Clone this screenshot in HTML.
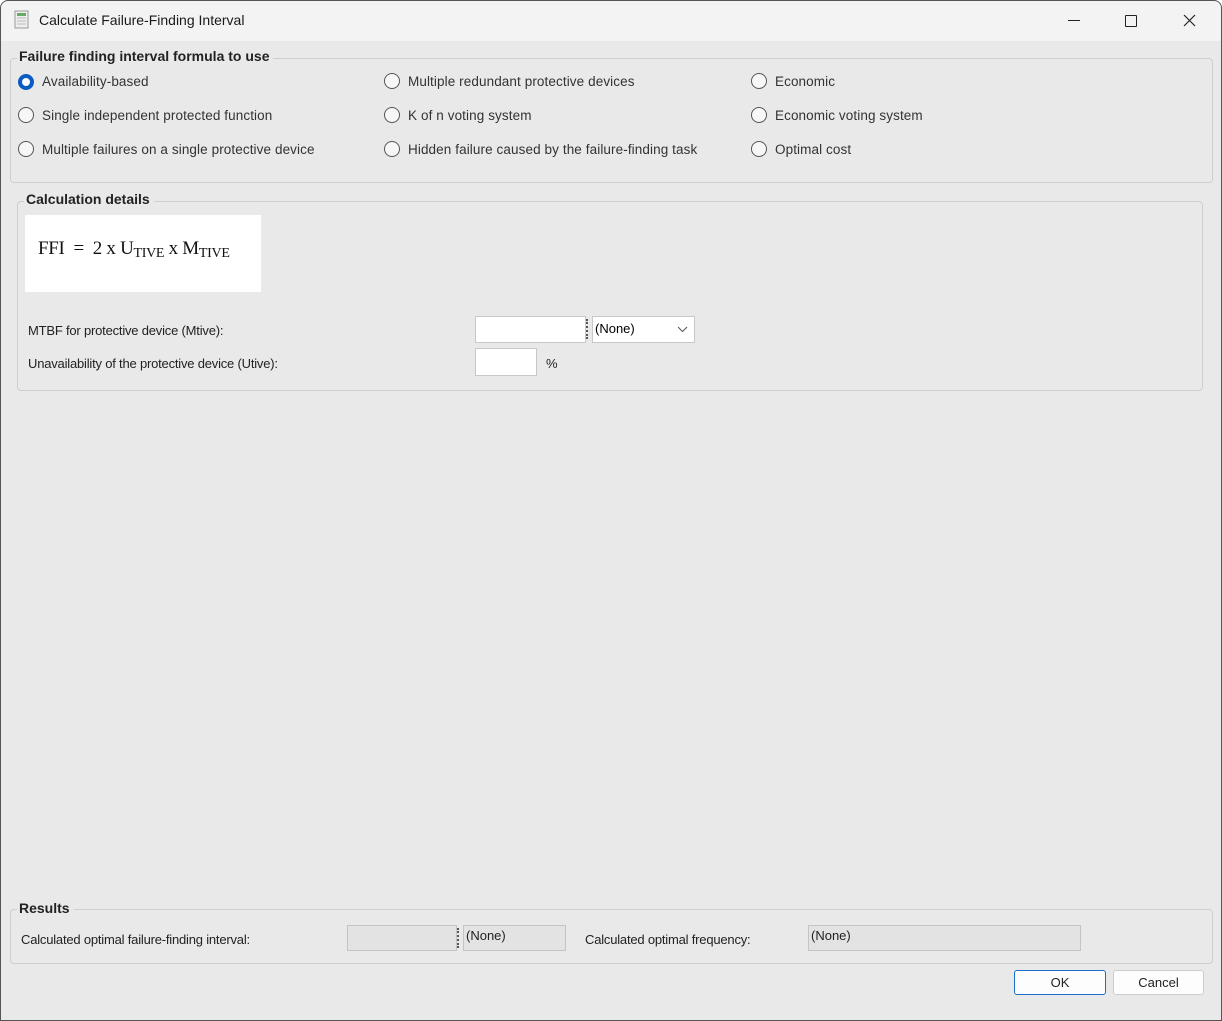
<!DOCTYPE html><html><head><meta charset="utf-8"><style>
body{margin:0;width:1222px;height:1021px;overflow:hidden;font-family:"Liberation Sans",sans-serif;}
.win{position:absolute;left:0;top:0;width:1222px;height:1021px;background:#e9e9e9;overflow:hidden;border-radius:8px 8px 0 0}
.in0{position:absolute;left:1px;top:1px;width:1220px;height:1019px}
.bd{position:absolute;left:0;top:0;width:1220px;height:1019px;border:1px solid #555;border-radius:8px 8px 0 0}
.title{position:absolute;left:-1px;top:-1px;width:1222px;height:41px;background:#f3f3f3}
.t{position:absolute;font-size:14px;color:#1a1a1a}
.box{position:absolute;border:1px solid #cfcfcf;border-radius:4px}
.lg{position:absolute;font-size:14px;font-weight:bold;color:#222;background:#e9e9e9;padding:0 4px 0 2px}
.r{position:absolute;font-size:13.5px;color:#333;letter-spacing:0.1px}
.rd{position:absolute;width:14px;height:14px;border:1px solid #555;border-radius:50%;background:#f7f7f7}
.s{position:absolute;font-size:13px;color:#222;letter-spacing:-0.2px}
.in{position:absolute;background:#fff;border:1px solid #c8c8c8}
.dis{position:absolute;background:#e3e3e3;border:1px solid #c4c4c4;font-size:13px;color:#222;box-sizing:border-box;padding:2px 2px}
.btn{position:absolute;height:25px;box-sizing:border-box;border:1px solid #ccc;background:#fdfdfd;border-radius:3px;font-size:13px;text-align:center;line-height:23px;color:#222}
sub{font-size:14px;vertical-align:-3px}
</style></head><body><div class="win"><div class="in0">
<div class="title">
<svg style="position:absolute;left:14px;top:10px" width="16" height="19"><rect x="1" y="1" width="13" height="17" fill="#eee" stroke="#999"/><rect x="3" y="3" width="9" height="3" fill="#6a6"/><path d="M3 8h9M3 11h9M3 14h9" stroke="#bbb"/></svg>
<div class="t" style="left:39px;top:12px">Calculate Failure-Finding Interval</div>
<div style="position:absolute;left:1068px;top:20px;width:12px;height:1px;background:#222"></div>
<div style="position:absolute;left:1125px;top:15px;width:10px;height:10px;border:1px solid #222;border-radius:1px"></div>
<svg style="position:absolute;left:1183px;top:14px" width="13" height="13"><path d="M1 1L12 12M12 1L1 12" stroke="#222" stroke-width="1.2"/></svg>
</div>
<div class="box" style="left:9px;top:57px;width:1201px;height:123px"></div>
<div class="lg" style="left:16px;top:47px">Failure finding interval formula to use</div>
<div class="rd" style="left:17px;top:73px;border:4px solid #0a5cc2;width:8px;height:8px;background:#fff"></div><div class="r" style="left:41px;top:73px">Availability-based</div>
<div class="rd" style="left:17px;top:106px"></div><div class="r" style="left:41px;top:107px">Single independent protected function</div>
<div class="rd" style="left:17px;top:140px"></div><div class="r" style="left:41px;top:141px">Multiple failures on a single protective device</div>
<div class="rd" style="left:383px;top:72px"></div><div class="r" style="left:407px;top:73px">Multiple redundant protective devices</div>
<div class="rd" style="left:383px;top:106px"></div><div class="r" style="left:407px;top:107px">K of n voting system</div>
<div class="rd" style="left:383px;top:140px"></div><div class="r" style="left:407px;top:141px">Hidden failure caused by the failure-finding task</div>
<div class="rd" style="left:750px;top:72px"></div><div class="r" style="left:774px;top:73px">Economic</div>
<div class="rd" style="left:750px;top:106px"></div><div class="r" style="left:774px;top:107px">Economic voting system</div>
<div class="rd" style="left:750px;top:140px"></div><div class="r" style="left:774px;top:141px">Optimal cost</div>
<div class="box" style="left:16px;top:200px;width:1184px;height:188px"></div>
<div class="lg" style="left:23px;top:190px">Calculation details</div>
<div style="position:absolute;left:24px;top:214px;width:236px;height:77px;background:#fff;font-family:'Liberation Serif',serif;font-size:19px;color:#111">
<div style="position:absolute;left:13px;top:23px;white-space:nowrap;letter-spacing:-0.3px">FFI &nbsp;= &nbsp;2 x U<sub>TIVE</sub> x M<sub>TIVE</sub></div></div>
<div class="s" style="left:27px;top:322px">MTBF for protective device (Mtive):</div>
<div class="s" style="left:27px;top:355px">Unavailability of the protective device (Utive):</div>
<div class="in" style="left:474px;top:315px;width:109px;height:25px"></div>
<div style="position:absolute;left:585px;top:318px;width:2px;height:20px;border-left:2px dotted #555"></div>
<div class="in" style="left:591px;top:315px;width:101px;height:25px;font-size:13px"><span style="position:absolute;left:2px;top:4px">(None)</span><svg style="position:absolute;left:84px;top:9px" width="11" height="7"><path d="M1 1l4.5 4.5L10 1" stroke="#555" fill="none"/></svg></div>
<div class="in" style="left:474px;top:347px;width:60px;height:26px"></div>
<div class="s" style="left:545px;top:355px">%</div>
<div class="box" style="left:9px;top:908px;width:1201px;height:53px"></div>
<div class="lg" style="left:16px;top:899px">Results</div>
<div class="s" style="left:20px;top:931px">Calculated optimal failure-finding interval:</div>
<div class="dis" style="left:346px;top:924px;width:110px;height:26px"></div>
<div style="position:absolute;left:456px;top:927px;width:2px;height:20px;border-left:2px dotted #555"></div>
<div class="dis" style="left:462px;top:924px;width:103px;height:26px">(None)</div>
<div class="s" style="left:584px;top:931px">Calculated optimal frequency:</div>
<div class="dis" style="left:807px;top:924px;width:273px;height:26px">(None)</div>
<div class="btn" style="left:1013px;top:969px;width:92px;border-color:#1a6fc9">OK</div>
<div class="btn" style="left:1112px;top:969px;width:91px">Cancel</div>
</div></div><div class="bd"></div></body></html>
